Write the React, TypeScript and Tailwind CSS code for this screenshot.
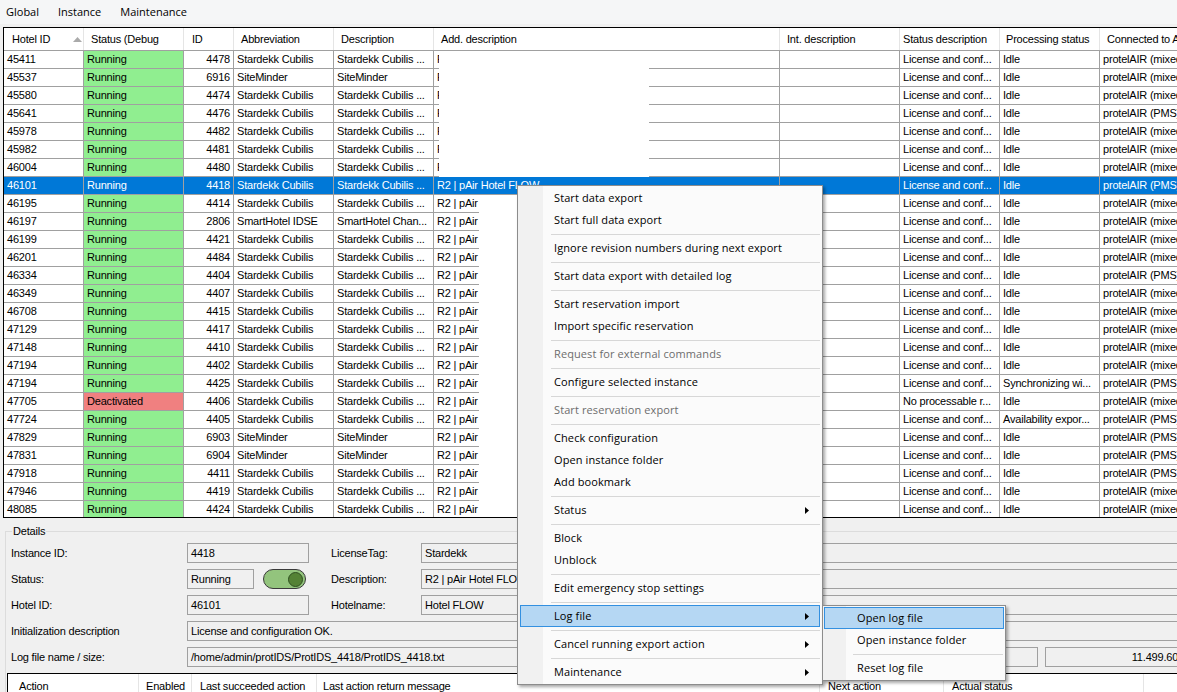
import React from "react";

const grid = "font-['Liberation_Sans',Arial,sans-serif] text-[11px] tracking-[-0.2px]";
const ui = "font-['Open_Sans','Noto_Sans',sans-serif] text-[11px]";

const ABBR: Record<string, [string, string]> = {
  S: ["Stardekk Cubilis", "Stardekk Cubilis ..."],
  M: ["SiteMinder", "SiteMinder"],
  H: ["SmartHotel IDSE", "SmartHotel Chan..."],
};

// hotelId, status, id, abbr, statusDesc, processing, connected
const rows: [string, string, string, string, string, string, string][] = [
  ["45411", "Running", "4478", "S", "License and conf...", "Idle", "mixed"],
  ["45537", "Running", "6916", "M", "License and conf...", "Idle", "mixed"],
  ["45580", "Running", "4474", "S", "License and conf...", "Idle", "mixed"],
  ["45641", "Running", "4476", "S", "License and conf...", "Idle", "PMS"],
  ["45978", "Running", "4482", "S", "License and conf...", "Idle", "mixed"],
  ["45982", "Running", "4481", "S", "License and conf...", "Idle", "mixed"],
  ["46004", "Running", "4480", "S", "License and conf...", "Idle", "mixed"],
  ["46101", "Running", "4418", "S", "License and conf...", "Idle", "PMS"],
  ["46195", "Running", "4414", "S", "License and conf...", "Idle", "mixed"],
  ["46197", "Running", "2806", "H", "License and conf...", "Idle", "mixed"],
  ["46199", "Running", "4421", "S", "License and conf...", "Idle", "mixed"],
  ["46201", "Running", "4484", "S", "License and conf...", "Idle", "mixed"],
  ["46334", "Running", "4404", "S", "License and conf...", "Idle", "PMS"],
  ["46349", "Running", "4407", "S", "License and conf...", "Idle", "mixed"],
  ["46708", "Running", "4415", "S", "License and conf...", "Idle", "mixed"],
  ["47129", "Running", "4417", "S", "License and conf...", "Idle", "mixed"],
  ["47148", "Running", "4410", "S", "License and conf...", "Idle", "mixed"],
  ["47194", "Running", "4402", "S", "License and conf...", "Idle", "mixed"],
  ["47194", "Running", "4425", "S", "License and conf...", "Synchronizing wi...", "PMS"],
  ["47705", "Deactivated", "4406", "S", "No processable r...", "Idle", "mixed"],
  ["47724", "Running", "4405", "S", "License and conf...", "Availability expor...", "PMS"],
  ["47829", "Running", "6903", "M", "License and conf...", "Idle", "PMS"],
  ["47831", "Running", "6904", "M", "License and conf...", "Idle", "PMS"],
  ["47918", "Running", "4411", "S", "License and conf...", "Idle", "PMS"],
  ["47946", "Running", "4419", "S", "License and conf...", "Idle", "mixed"],
  ["48085", "Running", "4424", "S", "License and conf...", "Idle", "mixed"],
];

const cell = "shrink-0 h-full border-r border-b border-[#a0a0a0] px-[3px] overflow-hidden whitespace-nowrap";

function GridRow({ r, idx }: { r: (typeof rows)[number]; idx: number }) {
  const sel = idx === 7;
  const [hid, status, id, ab, sdesc, proc, conn] = r;
  const statusBg = sel ? "" : status === "Running" ? "bg-[#90ee90]" : "bg-[#f08080]";
  return (
    <div className={`flex h-[18px] leading-[17px] ${sel ? "bg-[#0078d7] text-white" : "bg-white text-black"}`}>
      <div className={`${cell} w-[80px]`}>{hid}</div>
      <div className={`${cell} w-[100px] ${statusBg}`}>{status}</div>
      <div className={`${cell} w-[50px] text-right`}>{id}</div>
      <div className={`${cell} w-[100px]`}>{ABBR[ab][0]}</div>
      <div className={`${cell} w-[100px]`}>{ABBR[ab][1]}</div>
      {sel ? (
        <div className={`${cell} w-[346px]`}>R2 | pAir Hotel FLOW</div>
      ) : idx < 7 ? (
        <div className="shrink-0 w-[346px] h-full flex border-r border-[#a0a0a0]">
          <div className="w-[5px] h-full border-b border-[#a0a0a0] pl-[3px] overflow-hidden whitespace-nowrap">R2</div>
          <div className="w-[210px] h-full bg-white" />
          <div className="flex-1 h-full border-b border-[#a0a0a0]" />
        </div>
      ) : (
        <div className="shrink-0 w-[346px] h-full flex border-r border-[#a0a0a0]">
          <div className="w-[45px] h-full border-b border-[#a0a0a0] pl-[3px] overflow-hidden whitespace-nowrap">R2 | pAir</div>
          <div className="flex-1 h-full bg-white" />
        </div>
      )}
      <div className={`${cell} w-[120px]`} />
      <div className={`${cell} w-[100px]`}>{sdesc}</div>
      <div className={`${cell} w-[100px]`}>{proc}</div>
      <div className={`${cell} w-[120px]`}>{conn === "PMS" ? "protelAIR (PMS)" : "protelAIR (mixed mode)"}</div>
    </div>
  );
}

const headers: [string, string, string][] = [
  ["Hotel ID", "w-[80px]", "pl-[8px]"],
  ["Status (Debug", "w-[100px]", "pl-[7px]"],
  ["ID", "w-[50px]", "pl-[8px]"],
  ["Abbreviation", "w-[100px]", "pl-[7px]"],
  ["Description", "w-[100px]", "pl-[7px]"],
  ["Add. description", "w-[346px]", "pl-[7px]"],
  ["Int. description", "w-[120px]", "pl-[7px]"],
  ["Status description", "w-[100px]", "pl-[3px]"],
  ["Processing status", "w-[100px]", "pl-[6px]"],
  ["Connected to Application", "w-[120px]", "pl-[7px]"],
];

type MI = { t: string; dis?: boolean; sub?: boolean; hot?: boolean } | "sep";

const menu: MI[] = [
  { t: "Start data export" },
  { t: "Start full data export" },
  "sep",
  { t: "Ignore revision numbers during next export" },
  "sep",
  { t: "Start data export with detailed log" },
  "sep",
  { t: "Start reservation import" },
  { t: "Import specific reservation" },
  "sep",
  { t: "Request for external commands", dis: true },
  "sep",
  { t: "Configure selected instance" },
  "sep",
  { t: "Start reservation export", dis: true },
  "sep",
  { t: "Check configuration" },
  { t: "Open instance folder" },
  { t: "Add bookmark" },
  "sep",
  { t: "Status", sub: true },
  "sep",
  { t: "Block" },
  { t: "Unblock" },
  "sep",
  { t: "Edit emergency stop settings" },
  "sep",
  { t: "Log file", sub: true, hot: true },
  "sep",
  { t: "Cancel running export action", sub: true },
  "sep",
  { t: "Maintenance", sub: true },
];

const subMenu: MI[] = [{ t: "Open log file", hot: true }, { t: "Open instance folder" }, "sep", { t: "Reset log file" }];

function Arrow() {
  return (
    <svg width="4" height="7" viewBox="0 0 4 7" className="shrink-0">
      <polygon points="0,0 4,3.5 0,7" fill="#000" />
    </svg>
  );
}

function MenuList({ items, textPad, sepPad }: { items: MI[]; textPad: string; sepPad: string }) {
  return (
    <>
      {items.map((it, i) =>
        it === "sep" ? (
          <div key={i} className={`h-[6px] flex items-center ${sepPad}`}>
            <div className="h-px w-full bg-[#d7d7d7]" />
          </div>
        ) : (
          <div
            key={i}
            className={`h-[22px] flex items-center justify-between pr-[10px] border ${textPad} ${
              it.hot ? "bg-[#b5d7f3] border-[#3390e0]" : "border-transparent"
            } ${it.dis ? "text-[#6d6d6d]" : "text-black"}`}
          >
            <span className="whitespace-nowrap tracking-[0.1px]">{it.t}</span>
            {it.sub && <Arrow />}
          </div>
        )
      )}
    </>
  );
}

const box = "h-[20px] border border-[#a0a0a0] bg-[#f0f0f0] px-[3px] leading-[18px] whitespace-nowrap overflow-hidden";

export default function App() {
  return (
    <div className="relative w-[1177px] h-[692px] overflow-hidden bg-[#f0f0f0]">
      {/* menu bar */}
      <div className={`${ui} h-[24px] flex items-center gap-[19px] pl-[6px] bg-[#f5f6f7] text-black`}>
        <span>Global</span>
        <span>Instance</span>
        <span>Maintenance</span>
      </div>

      {/* instances grid */}
      <div className={`${grid} mt-[3px] ml-[3px] h-[491px] w-[1200px] overflow-hidden border-l border-t border-b border-black bg-white`}>
        <div className="flex h-[23px] border-b border-[#a0a0a0] bg-white">
          {headers.map(([t, w, p], i) => (
            <div key={t} className={`${w} ${p} shrink-0 h-full border-r border-[#e5e5e5] flex items-center pt-[1px] whitespace-nowrap overflow-hidden`}>
              <span>{t}</span>
              {i === 0 && (
                <svg width="9" height="5" viewBox="0 0 9 5" className="ml-[23px]">
                  <polygon points="0,5 4.5,0 9,5" fill="#aaaaaa" />
                </svg>
              )}
            </div>
          ))}
        </div>
        {rows.map((r, i) => (
          <GridRow key={i} r={r} idx={i} />
        ))}
      </div>

      {/* details */}
      <fieldset className={`${grid} mt-[6px] ml-[5px] w-[1186px] border border-[#dcdcdc] pl-[1px] pb-[4px] text-black`}>
        <legend className="ml-[5px] px-[1px] leading-[14px]">Details</legend>
        <div className="flex flex-col gap-[6px] pt-[5px]">
          <div className="flex items-center h-[20px]">
            <span className="w-[180px] pl-[4px]">Instance ID:</span>
            <div className={`${box} w-[122px]`}>4418</div>
            <span className="ml-[22px] w-[90px]">LicenseTag:</span>
            <div className={`${box} flex-1`}>Stardekk</div>
          </div>
          <div className="flex items-center h-[20px]">
            <span className="w-[180px] pl-[4px]">Status:</span>
            <div className={`${box} w-[67px]`}>Running</div>
            <div className="ml-[9px] w-[43px] h-[20px] rounded-full border border-[#3a3a3a] bg-[#93c47d] flex items-center justify-end pr-[2px]">
              <div className="w-[15px] h-[15px] rounded-full bg-[#548235] border border-[#2f4f20]" />
            </div>
            <span className="ml-[25px] w-[90px]">Description:</span>
            <div className={`${box} flex-1`}>R2 | pAir Hotel FLOW</div>
          </div>
          <div className="flex items-center h-[20px]">
            <span className="w-[180px] pl-[4px]">Hotel ID:</span>
            <div className={`${box} w-[122px]`}>46101</div>
            <span className="ml-[22px] w-[90px]">Hotelname:</span>
            <div className={`${box} flex-1`}>Hotel FLOW</div>
          </div>
          <div className="flex items-center h-[20px]">
            <span className="w-[180px] pl-[4px]">Initialization description</span>
            <div className={`${box} flex-1`}>License and configuration OK.</div>
          </div>
          <div className="flex items-center h-[20px]">
            <span className="w-[180px] pl-[4px]">Log file name / size:</span>
            <div className={`${box} w-[851px]`}>/home/admin/protIDS/ProtIDS_4418/ProtIDS_4418.txt</div>
            <div className={`${box} ml-[7px] flex-1 text-right pr-[5px]`}>11.499.601</div>
          </div>
          {/* actions grid */}
          <div className="h-[24px] border-l border-t border-black bg-white flex">
            {[
              ["Action", "w-[131px]", "pl-[11px]"],
              ["Enabled", "w-[53px]", "pl-[7px]"],
              ["Last succeeded action", "w-[125px]", "pl-[8px]"],
              ["Last action return message", "w-[503px]", "pl-[6px]"],
              ["Next action", "w-[124px]", "pl-[8px]"],
              ["Actual status", "w-[200px]", "pl-[8px]"],
            ].map(([t, w, p]) => (
              <div key={t} className={`${w} ${p} shrink-0 h-full border-r border-[#e5e5e5] pt-[2px] leading-[20px] whitespace-nowrap`}>
                {t}
              </div>
            ))}
          </div>
        </div>
      </fieldset>

      {/* context menu */}
      <div
        className={`${ui} absolute left-[517px] top-[185px] w-[306px] border border-[#8c8c8c] px-[2px] py-[1px] bg-[linear-gradient(to_right,#f1f1f1_25px,#fbfbfb_25px)] shadow-[2px_2px_3px_rgba(0,0,0,0.35)]`}
      >
        <MenuList items={menu} textPad="pl-[33px]" sepPad="pl-[31px]" />
      </div>

      {/* log file submenu */}
      <div
        className={`${ui} absolute left-[822px] top-[605px] w-[184px] border border-[#8c8c8c] px-[1px] py-[1px] bg-[linear-gradient(to_right,#f1f1f1_23px,#fbfbfb_23px)] shadow-[2px_2px_3px_rgba(0,0,0,0.35)]`}
      >
        <MenuList items={subMenu} textPad="pl-[32px]" sepPad="pl-[29px] pr-[1px]" />
      </div>
    </div>
  );
}
